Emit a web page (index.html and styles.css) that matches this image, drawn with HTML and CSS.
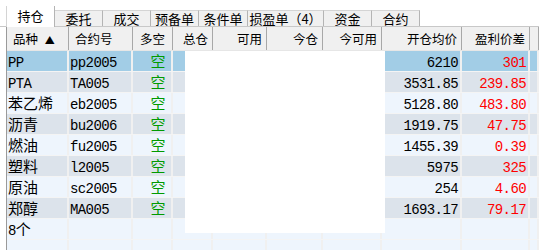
FILE: index.html
```html
<!DOCTYPE html>
<html>
<head>
<meta charset="utf-8">
<link rel="stylesheet" href="styles.css">
</head>
<body>
<div class="app">
  <div class="tabs">
    <div class="tab active">持仓</div>
    <div class="tab w47">委托</div>
    <div class="tab w47">成交</div>
    <div class="tab w47">预备单</div>
    <div class="tab w48">条件单</div>
    <div class="tab w76">损盈单（4）</div>
    <div class="tab w47">资金</div>
    <div class="tab w47">合约</div>
  </div>
  <div class="grid">
    <div class="row head">
      <div class="c l pl6">品种 <span class="arrow">▲</span></div>
      <div class="c l pl6">合约号</div>
      <div class="c ctr">多空</div>
      <div class="c r">总仓</div>
      <div class="c r">可用</div>
      <div class="c r">今仓</div>
      <div class="c r">今可用</div>
      <div class="c r">开仓均价</div>
      <div class="c r">盈利价差</div>
      <div class="c"></div>
    </div>
    <div class="row sel">
      <div class="c l"><span class="a">PP</span></div>
      <div class="c l"><span class="a">pp2005</span></div>
      <div class="c ctr green">空</div>
      <div class="c"></div><div class="c"></div><div class="c"></div><div class="c"></div>
      <div class="c r"><span class="a">6210</span></div>
      <div class="c r red"><span class="a">301</span></div>
      <div class="c"></div>
    </div>
    <div class="row dark">
      <div class="c l"><span class="a">PTA</span></div>
      <div class="c l"><span class="a">TA005</span></div>
      <div class="c ctr green">空</div>
      <div class="c"></div><div class="c"></div><div class="c"></div><div class="c"></div>
      <div class="c r"><span class="a">3531.85</span></div>
      <div class="c r red"><span class="a">239.85</span></div>
      <div class="c"></div>
    </div>
    <div class="row light">
      <div class="c l">苯乙烯</div>
      <div class="c l"><span class="a">eb2005</span></div>
      <div class="c ctr green">空</div>
      <div class="c"></div><div class="c"></div><div class="c"></div><div class="c"></div>
      <div class="c r"><span class="a">5128.80</span></div>
      <div class="c r red"><span class="a">483.80</span></div>
      <div class="c"></div>
    </div>
    <div class="row dark">
      <div class="c l">沥青</div>
      <div class="c l"><span class="a">bu2006</span></div>
      <div class="c ctr green">空</div>
      <div class="c"></div><div class="c"></div><div class="c"></div><div class="c"></div>
      <div class="c r"><span class="a">1919.75</span></div>
      <div class="c r red"><span class="a">47.75</span></div>
      <div class="c"></div>
    </div>
    <div class="row light">
      <div class="c l">燃油</div>
      <div class="c l"><span class="a">fu2005</span></div>
      <div class="c ctr green">空</div>
      <div class="c"></div><div class="c"></div><div class="c"></div><div class="c"></div>
      <div class="c r"><span class="a">1455.39</span></div>
      <div class="c r red"><span class="a">0.39</span></div>
      <div class="c"></div>
    </div>
    <div class="row dark">
      <div class="c l">塑料</div>
      <div class="c l"><span class="a">l2005</span></div>
      <div class="c ctr green">空</div>
      <div class="c"></div><div class="c"></div><div class="c"></div><div class="c"></div>
      <div class="c r"><span class="a">5975</span></div>
      <div class="c r red"><span class="a">325</span></div>
      <div class="c"></div>
    </div>
    <div class="row light">
      <div class="c l">原油</div>
      <div class="c l"><span class="a">sc2005</span></div>
      <div class="c ctr green">空</div>
      <div class="c"></div><div class="c"></div><div class="c"></div><div class="c"></div>
      <div class="c r"><span class="a">254</span></div>
      <div class="c r red"><span class="a">4.60</span></div>
      <div class="c"></div>
    </div>
    <div class="row dark">
      <div class="c l">郑醇</div>
      <div class="c l"><span class="a">MA005</span></div>
      <div class="c ctr green">空</div>
      <div class="c"></div><div class="c"></div><div class="c"></div><div class="c"></div>
      <div class="c r"><span class="a">1693.17</span></div>
      <div class="c r red"><span class="a">79.17</span></div>
      <div class="c"></div>
    </div>
    <div class="row light">
      <div class="c l"><span class="a">8</span>个</div>
      <div class="c"></div><div class="c"></div><div class="c"></div><div class="c"></div>
      <div class="c"></div><div class="c"></div><div class="c"></div><div class="c"></div>
      <div class="c"></div>
    </div>
    <div class="row light">
      <div class="c"></div><div class="c"></div><div class="c"></div><div class="c"></div>
      <div class="c"></div><div class="c"></div><div class="c"></div><div class="c"></div>
      <div class="c"></div><div class="c"></div>
    </div>
    <div class="mask"></div>
  </div>
</div>
</body>
</html>
```
FILE: styles.css
```css
html, body {
  margin: 0;
  padding: 0;
  background: #ffffff;
}
body {
  width: 539px;
  height: 250px;
  overflow: hidden;
  font-family: "Noto Sans CJK SC", sans-serif;
}
.app {
  width: 539px;
  height: 250px;
  overflow: hidden;
  background: #ffffff;
}
.tabs {
  display: flex;
  align-items: flex-end;
  height: 27px;
  box-sizing: border-box;
  padding-left: 6px;
  border-bottom: 1px solid #c8c8c8;
}
.tab {
  height: 16px;
  box-sizing: border-box;
  background: #f0f0f0;
  border-top: 1px solid #d4d4d4;
  border-right: 1px solid #b4b4b4;
  font-size: 13px;
  line-height: 15px;
  text-align: center;
  color: #000;
}
.tab.active {
  width: 49px;
  height: 21px;
  line-height: 20px;
  background: #ffffff;
  border-top: none;
  border-left: 1px solid #d4d4d4;
  margin-bottom: -1px;
  position: relative;
}
.w47 { width: 48px; }
.w48 { width: 49px; }
.w76 { width: 76px; }
.grid {
  position: relative;
  margin-left: 6px;
  border-left: 1px solid #9a9a9a;
  height: 223px;
}
.row {
  display: grid;
  grid-template-columns: 62px 64px 40px 40px 54px 56px 59px 80px 68px 9px;
  height: 21px;
  box-sizing: border-box;
  border-bottom: 1px solid #f4f4f4;
}
.row.head {
  height: 24px;
  background: #f0f0f0;
  border-bottom: 1px solid #e6e6e6;
}
.c {
  box-sizing: border-box;
  border-right: 2px solid #f0f0f0;
  overflow: hidden;
  white-space: nowrap;
  font-size: 15px;
  line-height: 20px;
  padding: 0 2px 0 1px;
  color: #000;
}
.c.l { text-align: left; }
.c.r { text-align: right; }
.c.ctr { text-align: center; padding-left: 12px; padding-right: 0; }
.head .c {
  font-size: 12.5px;
  line-height: 23px;
  color: #000;
  border-right: 1px solid #a8a8a8;
  padding: 0 4px;
}
.head .c.pl6 { padding-left: 6px; }
.head .c.ctr { text-align: center; padding: 0 4px; }
.arrow {
  font-size: 10px;
  margin-left: 4px;
}
.a {
  font-family: "Liberation Mono", monospace;
  font-size: 14px;
  letter-spacing: -0.6px;
}
.sel { background: #a2cde6; }
.dark { background: #dce3eb; }
.light { background: #eef5fd; }
.green { color: #009a00; }
.red { color: #ff0000; }
.mask {
  position: absolute;
  left: 178px;
  top: 24px;
  width: 200px;
  height: 182px;
  background: #ffffff;
}
```
